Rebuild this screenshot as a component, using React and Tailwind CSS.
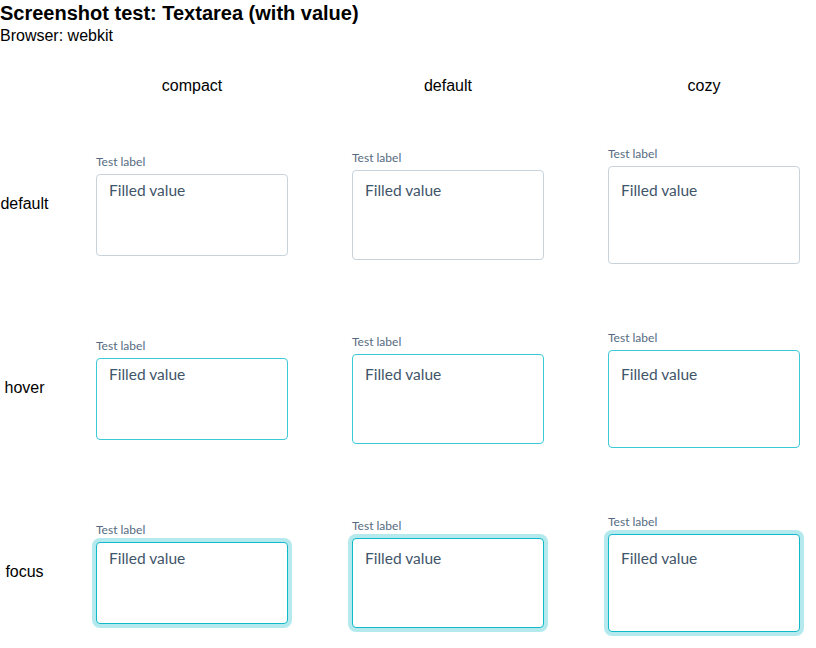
import React from 'react';

const sizes = [
  { name: 'compact', box: 'h-[82px] pt-[5px]' },
  { name: 'default', box: 'h-[90px] pt-[9px]' },
  { name: 'cozy', box: 'h-[98px] pt-[13px]' },
];

const states = [
  { name: 'default', box: 'border-[#c9d3dc]' },
  { name: 'hover', box: 'border-[#3ccad7]' },
  { name: 'focus', box: 'border-[#12b9c8] ring-4 ring-[#b4e9ed]' },
];

const Field = ({ size, state }) => (
  <div className="flex flex-col pl-8" style={{ fontFamily: 'Lato, "Noto Sans", sans-serif' }}>
    <label className="text-[12px] leading-[20px] text-[#566b7f] mb-[2px]">Test label</label>
    <textarea
      readOnly
      value="Filled value"
      className={`w-[192px] resize-none rounded-[4px] border bg-white px-3 text-[15.5px] leading-[20px] text-[#3f5569] outline-none ${size.box} ${state.box}`}
      style={{ fontFamily: 'Lato, "Noto Sans", sans-serif' }}
    />
  </div>
);

export default function App() {
  return (
    <div className="h-[648px] w-[816px] overflow-hidden bg-white text-black" style={{ fontFamily: '"Liberation Sans", Arial, sans-serif' }}>
      <h1 className="text-[20px] font-bold leading-[27px]">Screenshot test: Textarea (with value)</h1>
      <p className="text-[16px] leading-[18px]">Browser: webkit</p>

      <div className="grid grid-cols-[64px_256px_256px_240px]">
        {/* header row */}
        <div className="h-[67px]" />
        {sizes.map((s) => (
          <div key={s.name} className="h-[67px] pt-[32px]">
            <div className="ml-8 w-[192px] text-center text-[16px] leading-[18px]">{s.name}</div>
          </div>
        ))}

        {states.map((st) => (
          <React.Fragment key={st.name}>
            <div className="flex h-[184px] items-center">
              <span className="w-[49px] text-center text-[16px] leading-[18px]">{st.name}</span>
            </div>
            {sizes.map((s) => (
              <div key={s.name} className="flex h-[184px] items-center">
                <Field size={s} state={st} />
              </div>
            ))}
          </React.Fragment>
        ))}
      </div>
    </div>
  );
}
